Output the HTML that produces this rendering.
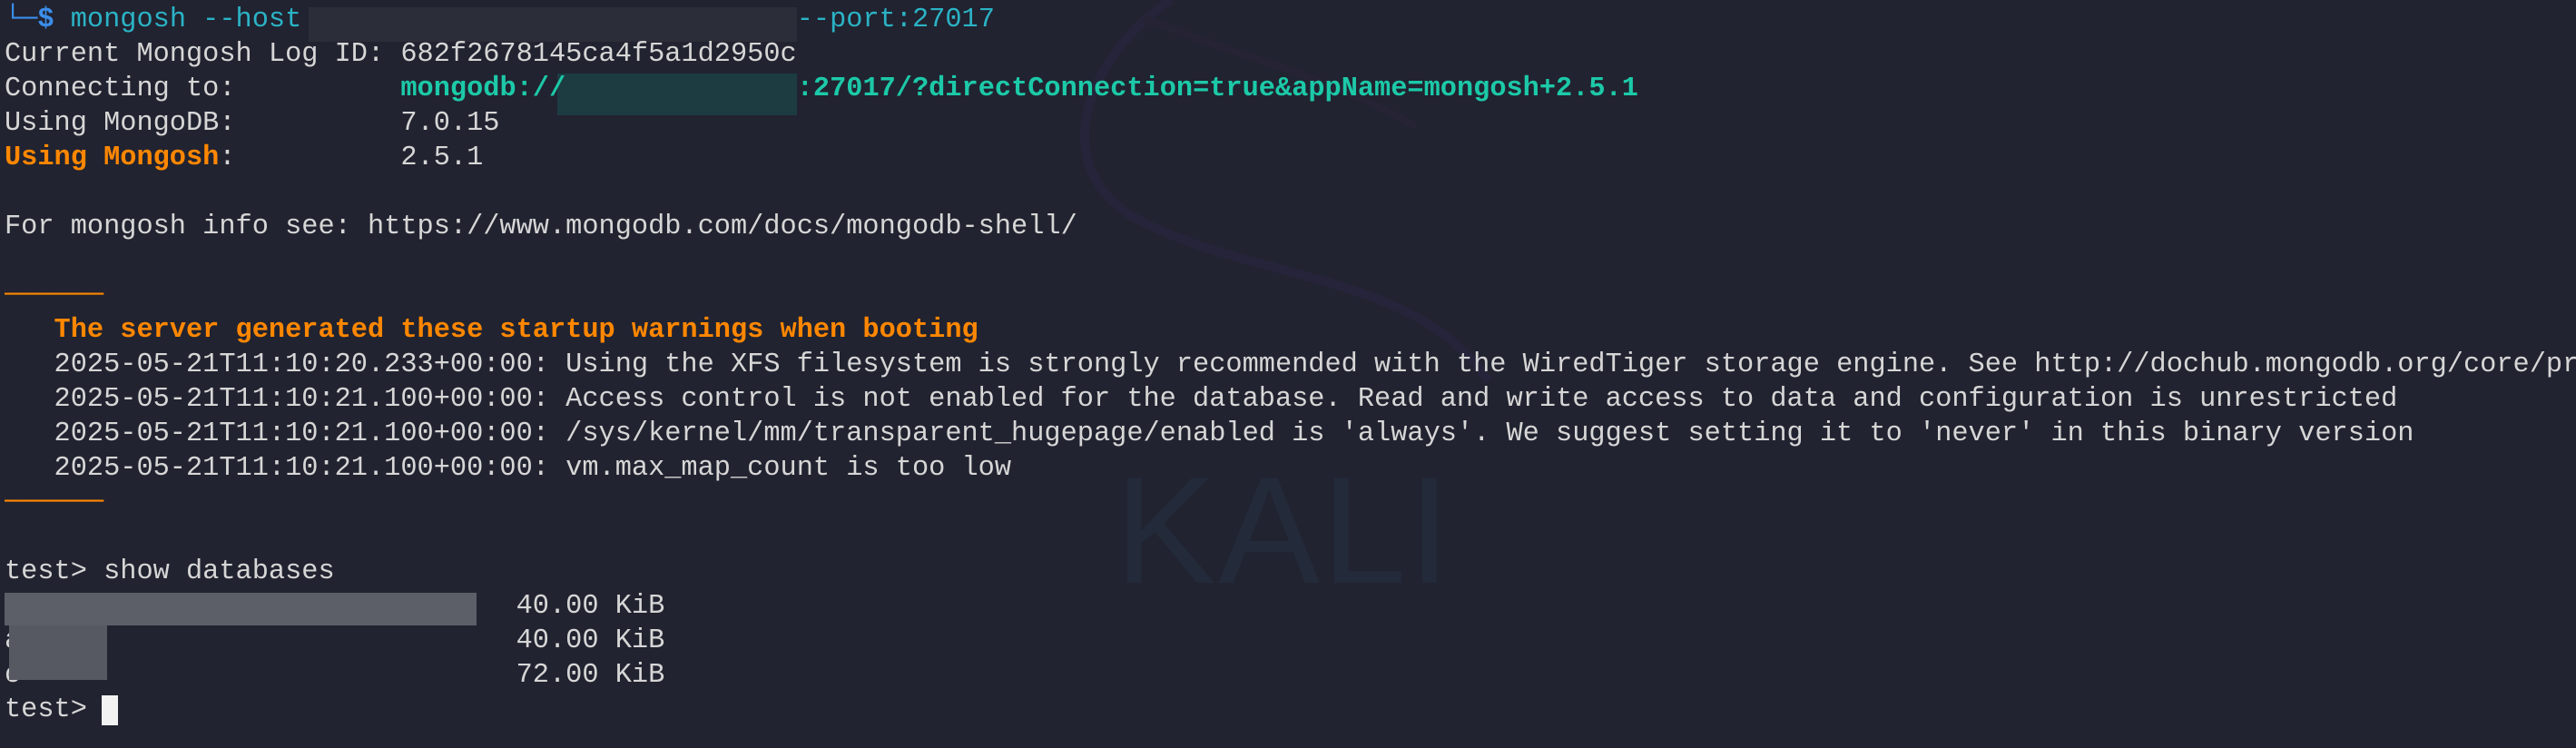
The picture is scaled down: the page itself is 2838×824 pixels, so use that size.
<!DOCTYPE html>
<html><head><meta charset="utf-8"><style>
html,body{margin:0;padding:0;}
body{width:2838px;height:824px;background:#212330;overflow:hidden;position:relative;}
.t{position:absolute;left:5px;top:3px;width:2833px;overflow:hidden;font-family:"Liberation Mono","DejaVu Sans Mono",monospace;font-size:30.3px;line-height:38px;color:#d6d6d6;white-space:pre;}
.b{color:#3b8eea;font-weight:bold}
.c{color:#2bb3c6}
.o{color:#ff8700;font-weight:bold}
.g{color:#1cc9a8;font-weight:bold}
.box{position:absolute;}
.wm{position:absolute;left:1228px;top:488px;font-family:"Liberation Sans",sans-serif;font-size:168px;color:#232a3a;letter-spacing:2px;}
</style></head><body>
<svg style="position:absolute;left:0;top:0" width="2838" height="824">
<path d="M1290 0 C1200 60 1150 180 1250 240 C1380 310 1560 300 1640 420" fill="none" stroke="#26243a" stroke-width="10"/>
<path d="M1260 20 C1360 60 1480 90 1560 140" fill="none" stroke="#262434" stroke-width="8"/>
</svg>
<div class="wm">KALI</div>
<div class="box" style="left:340px;top:8px;width:538px;height:38px;background:#2b2d38"></div>
<div class="box" style="left:614px;top:81px;width:264px;height:46px;background:#1c3c42"></div>
<div class="t"><span class="b">└─$</span> <span class="c">mongosh --host</span>                              <span class="c">--port:27017</span>
Current Mongosh Log ID: 682f2678145ca4f5a1d2950c
Connecting to:          <span class="g">mongodb://</span>              <span class="g">:27017/?directConnection=true&amp;appName=mongosh+2.5.1</span>
Using MongoDB:          7.0.15
<span class="o">Using Mongosh</span>:          2.5.1

For mongosh info see: https://www.mongodb.com/docs/mongodb-shell/

<span style="color:#ff8700">──────</span>
   <span class="o">The server generated these startup warnings when booting</span>
   2025-05-21T11:10:20.233+00:00: Using the XFS filesystem is strongly recommended with the WiredTiger storage engine. See http://dochub.mongodb.org/core/prodnotes-filesystem
   2025-05-21T11:10:21.100+00:00: Access control is not enabled for the database. Read and write access to data and configuration is unrestricted
   2025-05-21T11:10:21.100+00:00: /sys/kernel/mm/transparent_hugepage/enabled is 'always'. We suggest setting it to 'never' in this binary version
   2025-05-21T11:10:21.100+00:00: vm.max_map_count is too low
<span style="color:#ff8700">──────</span>

test&gt; show databases
                               40.00 KiB
a                              40.00 KiB
c                              72.00 KiB
test&gt; </div>
<div class="box" style="left:5px;top:653px;width:520px;height:36px;background:#5c5f68"></div>
<div class="box" style="left:10px;top:689px;width:108px;height:60px;background:#565962"></div>
<div class="box" style="left:112px;top:766px;width:18px;height:33px;background:#f2f2f2"></div>
</body></html>
